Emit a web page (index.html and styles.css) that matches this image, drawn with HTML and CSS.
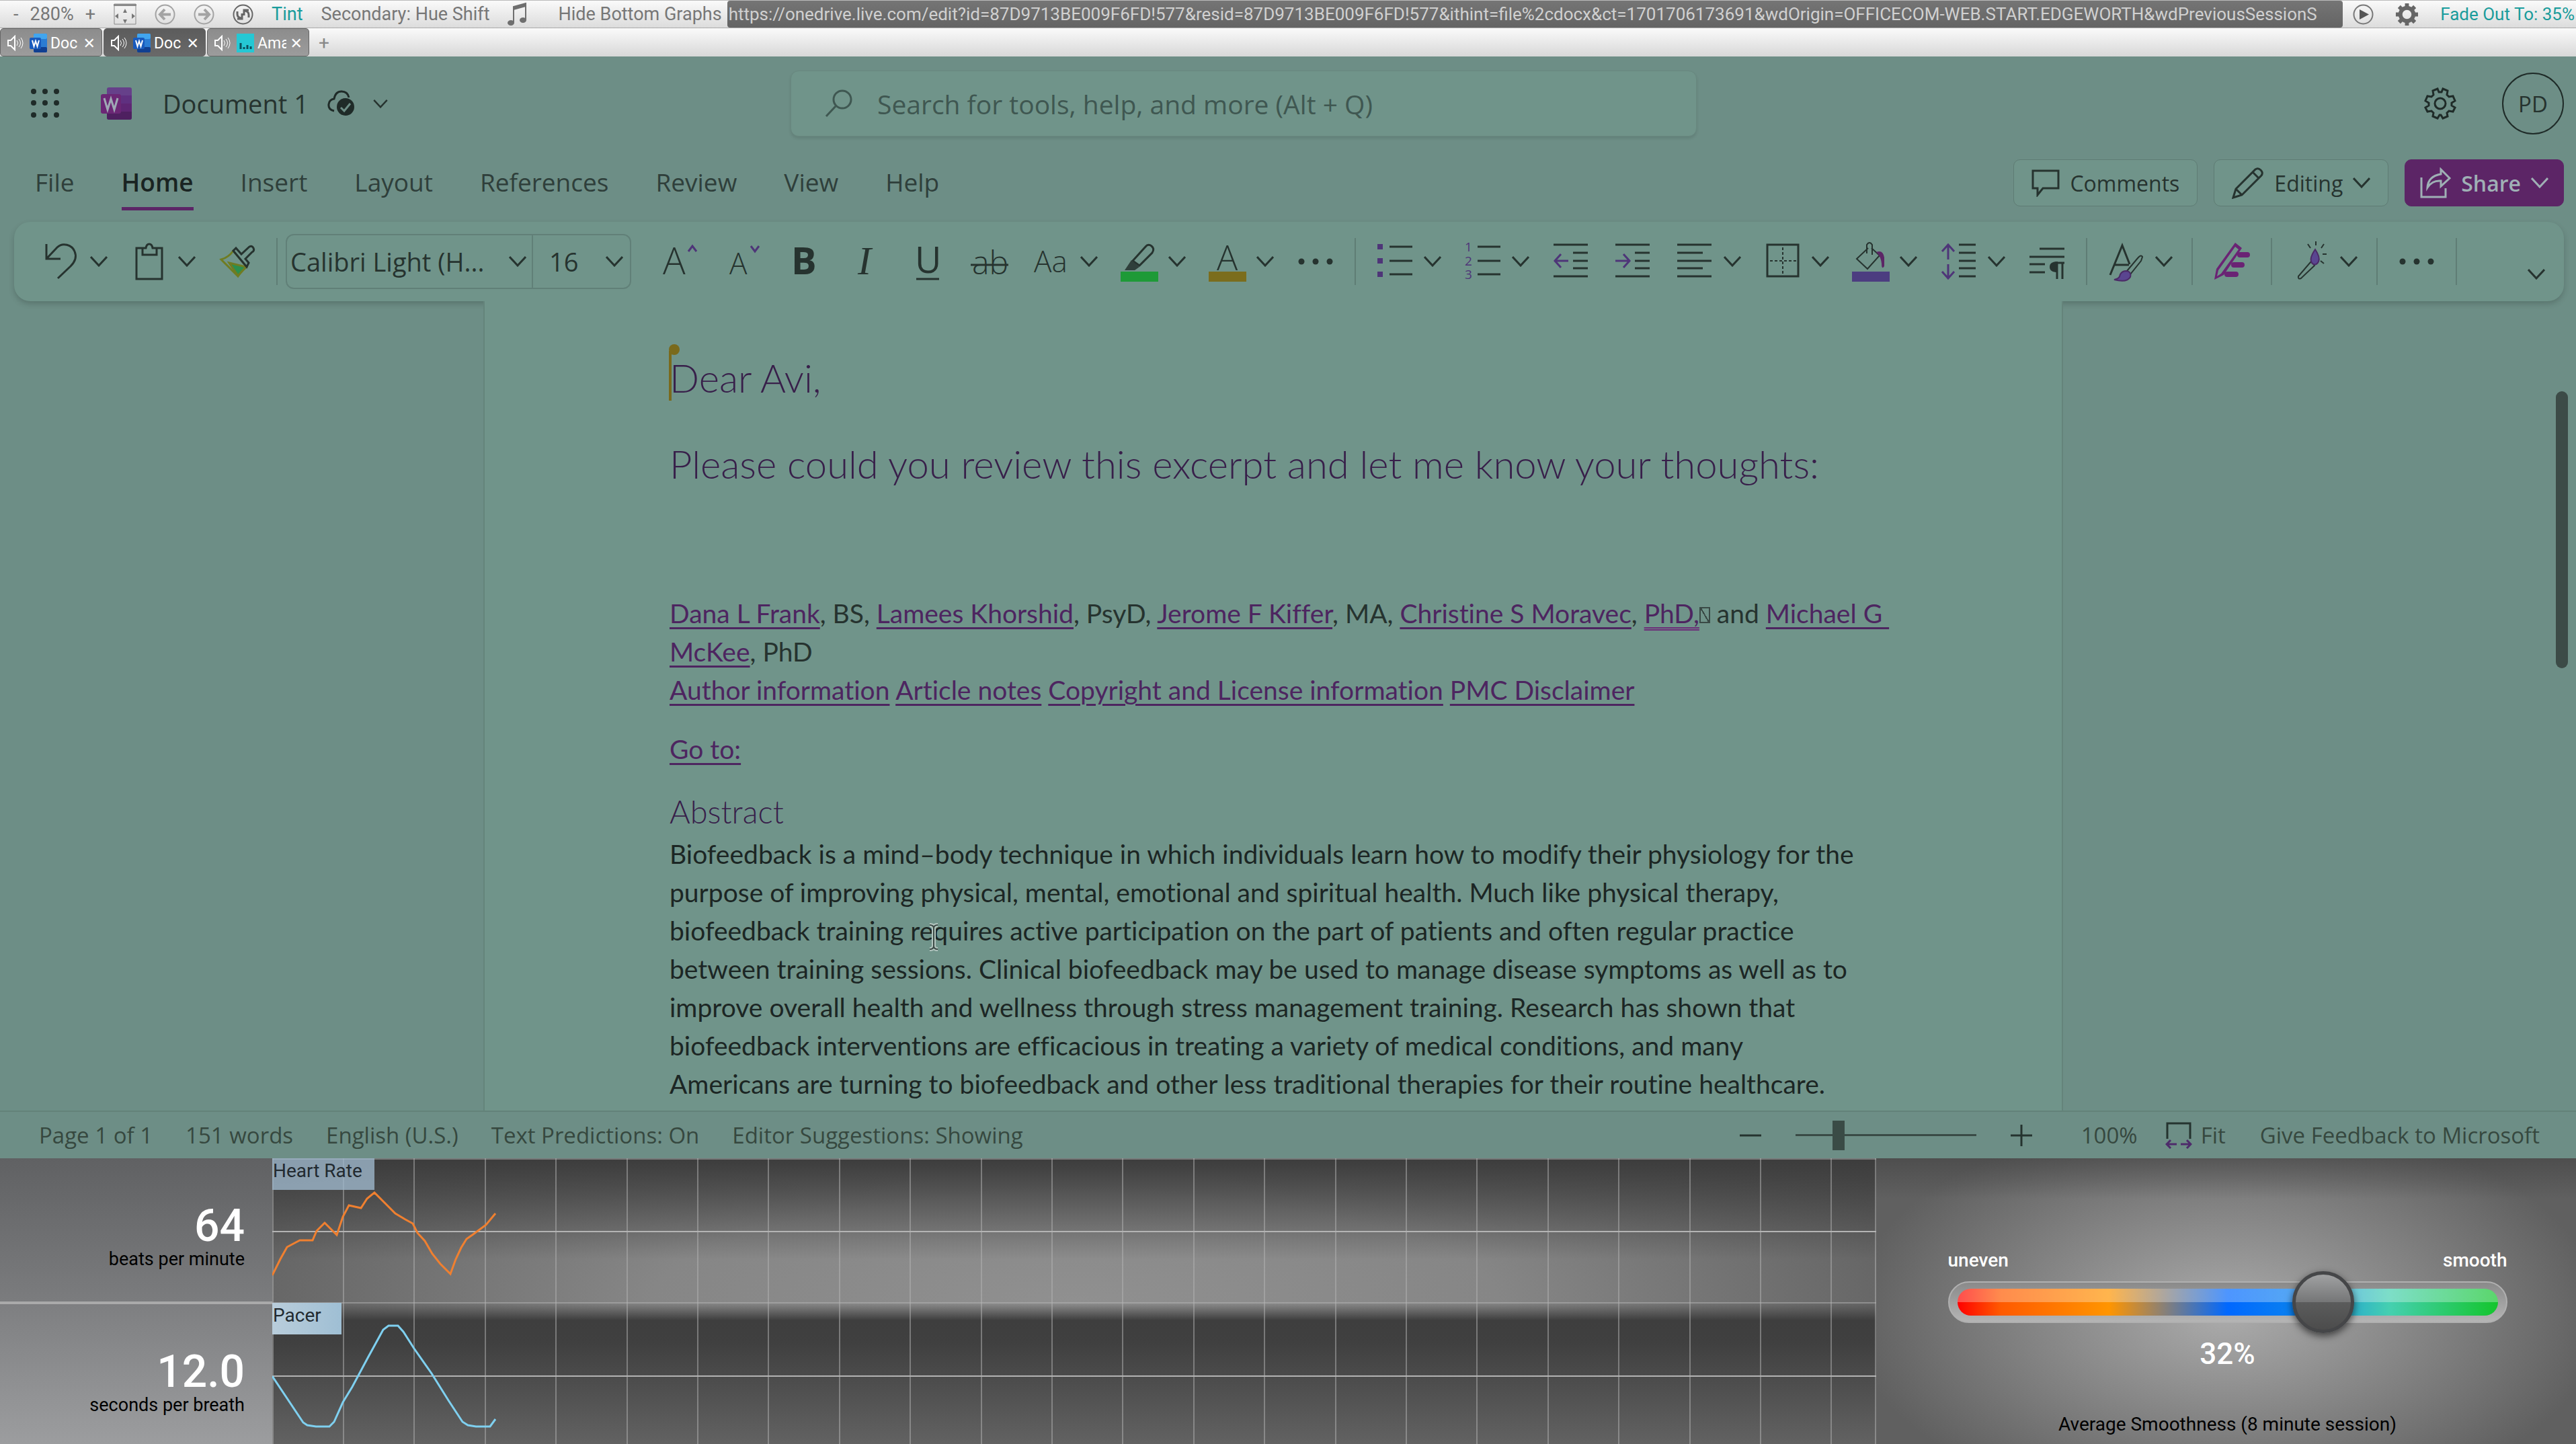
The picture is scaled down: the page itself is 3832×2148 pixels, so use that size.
FILE: index.html
```html
<!DOCTYPE html>
<html lang="en">
<head>
  <meta charset="UTF-8">
  <meta name="viewport" content="width=device-width, initial-scale=1">
  <title>Document 1</title>
  <link rel="stylesheet" href="styles.css">
</head>
<body>
  <svg class="sprites" aria-hidden="true">
    <symbol id="chevron" viewBox="0 0 26 16"><path d="M1 1l12 13L25 1" fill="none" stroke="currentColor" stroke-width="3"/></symbol>
    <symbol id="speaker" viewBox="0 0 24 24">
      <path d="M1 8h4l6-6v20l-6-6H1z" fill="none" stroke="currentColor" stroke-width="2"/>
      <path d="M14 8q3 4 0 8M17 6q5 6 0 12M20 4q6 8 0 16" fill="none" stroke="currentColor" stroke-width="1"/>
    </symbol>
    <symbol id="word" viewBox="0 0 26 28">
      <rect x="6" width="20" height="28" rx="2" fill="#2b7cd3"/>
      <rect x="6" width="20" height="8" rx="2" fill="#41a5ee"/>
      <rect x="6" y="20" width="20" height="8" rx="2" fill="#103f91"/>
      <rect y="6" width="17" height="17" rx="2" fill="#185abd"/>
      <path d="M4 10l2.500 9 2.500-8 2.500 8 2.500-9" fill="none" stroke="#fff" stroke-width="2"/>
    </symbol>
    <symbol id="dots" viewBox="0 0 56 64"><g fill="currentColor" stroke="none"><circle cx="7" cy="32" r="4.500"/><circle cx="28" cy="32" r="4.500"/><circle cx="49" cy="32" r="4.500"/></g></symbol>
  </svg>

  <div class="browser-bar">
    <div class="page-zoom">
      <button>-</button>
      <span>280%</span>
      <button>+</button>
    </div>
    <button aria-label="Full screen">
      <svg width="34" height="34" viewBox="0 0 34 34">
        <path d="M1 2h32v30H1z" fill="none" stroke="#8a8a8a" stroke-width="1"/>
        <path d="M0 2h34v3H0z" fill="#8a8a8a"/>
        <path d="M17 9l3 6h-6zM17 31l3-6h-6zM2 20l5-4v8zM32 20l-5-4v8z" fill="#777"/>
      </svg>
    </button>
    <button aria-label="Back">
      <svg width="31" height="31" viewBox="0 0 31 31" fill="none" stroke="#a3a3a3">
        <circle cx="15.500" cy="15.500" r="14" stroke-width="2"/><path d="M24 15.500H8M15 8l-7 7.500 7 7.500" stroke-width="4"/>
      </svg>
    </button>
    <button aria-label="Forward">
      <svg width="31" height="31" viewBox="0 0 31 31" fill="none" stroke="#a3a3a3">
        <circle cx="15.500" cy="15.500" r="14" stroke-width="2"/><path d="M7 15.500h16M16 8l7 7.500-7 7.500" stroke-width="4"/>
      </svg>
    </button>
    <button aria-label="Refresh">
      <svg width="31" height="31" viewBox="0 0 31 31" fill="none" stroke="#666">
        <circle cx="15.500" cy="15.500" r="14" stroke-width="2"/>
        <path d="M7 11v4q0 5 6 6M24 20v-4q0-5-6-6" stroke-width="3"/><path d="M14 14v8H7M17 17V9h7" stroke-width="3"/>
      </svg>
    </button>
    <button class="teal">Tint</button>
    <button>Secondary: Hue Shift</button>
    <button aria-label="Music">
      <svg width="30" height="36" viewBox="0 0 30 36">
        <path d="M9 31V7l18-5v25" fill="none" stroke="#6f6f6f" stroke-width="2"/><path d="M9 7l18-5v5L9 12z" fill="#6f6f6f"/>
        <ellipse cx="5" cy="31" rx="5" ry="4" fill="#6f6f6f"/><ellipse cx="23" cy="27" rx="5" ry="4" fill="#6f6f6f"/>
      </svg>
    </button>
    <div class="address">
      <button>Hide Bottom Graphs</button>
      <input type="text" aria-label="Address" value="https://onedrive.live.com/edit?id=87D9713BE009F6FD!577&amp;resid=87D9713BE009F6FD!577&amp;ithint=file%2cdocx&amp;ct=1701706173691&amp;wdOrigin=OFFICECOM-WEB.START.EDGEWORTH&amp;wdPreviousSessionS">
    </div>
    <div class="session-tools">
      <button aria-label="Play">
        <svg width="31" height="31" viewBox="0 0 31 31"><circle cx="15.500" cy="15.500" r="14" fill="none" stroke="#777" stroke-width="2"/><path d="M10 8v15l14-7.500z" fill="#555"/></svg>
      </button>
      <button aria-label="Settings">
        <svg width="35" height="35" viewBox="0 0 36 36">
          <circle cx="18" cy="18" r="10" fill="none" stroke="#666" stroke-width="6"/>
          <path d="M18 1v6M18 29v6M1 18h6M29 18h6M6 6l4 4M26 26l4 4M6 30l4-4M26 10l4-4" stroke="#666" stroke-width="6"/>
        </svg>
      </button>
      <button class="teal">Fade Out To: 35%</button>
    </div>
  </div>

  <div class="tab-strip">
    <div class="tab">
      <svg width="24" height="24"><use href="#speaker"/></svg><svg width="26" height="28"><use href="#word"/></svg>
      <span>Doc</span><button aria-label="Close tab">✕</button>
    </div>
    <div class="tab current">
      <svg width="24" height="24"><use href="#speaker"/></svg><svg width="26" height="28"><use href="#word"/></svg>
      <span>Doc</span><button aria-label="Close tab">✕</button>
    </div>
    <div class="tab">
      <svg width="24" height="24"><use href="#speaker"/></svg>
      <svg width="26" height="28" viewBox="0 0 26 28"><rect width="26" height="28" fill="#25c8d4"/><path d="M6 23v-9M11 23v-3M16 23v-6M21 23v-4" stroke="#0b4f5c" stroke-width="3"/></svg>
      <span>Ama</span><button aria-label="Close tab">✕</button>
    </div>
    <button class="new-tab" aria-label="New tab">+</button>
  </div>

  <div class="word-app">
    <header class="title-row">
      <button aria-label="App launcher">
        <svg width="46" height="46" viewBox="0 0 46 46" fill="#1f2b28">
          <circle cx="6" cy="5" r="4"/><circle cx="23" cy="5" r="4"/><circle cx="40" cy="5" r="4"/>
          <circle cx="6" cy="22" r="4"/><circle cx="23" cy="22" r="4"/><circle cx="40" cy="22" r="4"/>
          <circle cx="6" cy="40" r="4"/><circle cx="23" cy="40" r="4"/><circle cx="40" cy="40" r="4"/>
        </svg>
      </button>
      <svg class="word-logo" width="46" height="48" viewBox="0 0 46 48">
        <rect x="9" width="37" height="48" rx="3" fill="#66408a"/>
        <path d="M9 12h37v12H9z" fill="#5f3080"/><path d="M9 24h37v12H9z" fill="#5e2674"/>
        <path d="M9 36h37v9a3 3 0 0 1-3 3H12a3 3 0 0 1-3-3z" fill="#4e2060"/>
        <rect y="10" width="30" height="29" rx="3" fill="#6b2775"/>
        <path d="M5 16l5 17 5-16 5 16 5-17" fill="none" stroke="#9fa9b5" stroke-width="3"/>
      </svg>
      <h1>Document 1</h1>
      <svg width="42" height="40" viewBox="0 0 42 40">
        <path d="M10 31Q1 29 2 21q1-7 8-8Q12 2 21 2q9 0 11 9" fill="none" stroke="#1f2b28" stroke-width="3"/>
        <circle cx="27" cy="25" r="13" fill="#1f2b28"/><path d="M20 26l5 5 9-11" fill="none" stroke="#6d8e86" stroke-width="3"/>
      </svg>
      <svg class="title-arrow" width="22" height="13"><use href="#chevron"/></svg>
      <label class="search">
        <svg width="42" height="42" viewBox="0 0 42 42" fill="none" stroke="#3f5751" stroke-width="3"><circle cx="26" cy="15" r="13"/><path d="M16 25L2 40"/></svg>
        <input type="search" placeholder="Search for tools, help, and more (Alt + Q)">
      </label>
      <button class="settings" aria-label="Settings">
        <svg width="48" height="48" viewBox="0 0 48 48" fill="none" stroke="#1f2b28" stroke-width="3">
          <path d="M20 2l2 5h4l2-5 7 3-1 6 3 3 6-1 3 7-5 3v4l5 3-3 6-6-1-3 3 1 5-7 3-3-5h-2l-3 5-7-3 1-5-3-3-6 1-3-6 5-3v-4l-5-3 3-7 6 1 3-3-1-6z"/>
          <circle cx="24" cy="24" r="8"/>
        </svg>
      </button>
      <button class="avatar">PD</button>
    </header>

    <nav class="menu-row">
      <a href="#">File</a>
      <a href="#" class="active">Home</a>
      <a href="#">Insert</a>
      <a href="#">Layout</a>
      <a href="#">References</a>
      <a href="#">Review</a>
      <a href="#">View</a>
      <a href="#">Help</a>
      <div class="menu-actions">
        <button>
          <svg width="42" height="42" viewBox="0 0 42 42" fill="none" stroke="currentColor" stroke-width="3"><path d="M2 3h38v26H17L9 39V29H2z"/></svg>
          Comments
        </button>
        <button>
          <svg width="48" height="48" viewBox="0 0 48 48" fill="none" stroke="currentColor" stroke-width="3"><path d="M2 46l4-13L35 4q4-3 8 1t1 8L15 42zM6 33l9 9M31 8l9 9"/></svg>
          Editing
          <svg width="26" height="16"><use href="#chevron"/></svg>
        </button>
        <button class="share">
          <svg width="46" height="46" viewBox="0 0 46 46" fill="none" stroke="currentColor" stroke-width="3"><path d="M2 15v29h36V31M31 3l13 13-13 12v-8q-13-1-20 10Q12 13 31 10z"/></svg>
          Share
          <svg width="26" height="16"><use href="#chevron"/></svg>
        </button>
      </div>
    </nav>

    <div class="ribbon">
      <button class="tool split" aria-label="Undo">
        <svg class="icon" viewBox="0 0 56 64"><path d="M6 6v22h21M6 28l16-17c8-8 22-4 26 6 4 9 0 16-6 22L23 57"/></svg>
        <svg class="arrow"><use href="#chevron"/></svg>
      </button>
      <button class="tool split" aria-label="Paste">
        <svg class="icon" viewBox="0 0 56 64"><path d="M17 12H9v46h38V12h-8M18 12h5q1-6 5-6t5 6h6v10H18z"/></svg>
        <svg class="arrow"><use href="#chevron"/></svg>
      </button>
      <button class="tool" aria-label="Format Painter">
        <svg class="icon" viewBox="0 0 56 64">
          <path d="M4 29q11-3 18-13l20 24q-7 5-13 14z" stroke="#6f7c22"/><path d="M16 34l25 6-12 13z" fill="#2b8f4e" stroke="#6f7c22"/>
          <path d="M22 16l4-4 8 9 12-11q4-2 6 2t-2 6L40 28l5 6-3 6z" fill="#70948a"/>
        </svg>
      </button>
      <span class="divider"></span>
      <div class="font-box">
        <select class="font-name" aria-label="Font"><option>Calibri Light (H...</option></select>
        <svg class="arrow"><use href="#chevron"/></svg>
        <select class="font-size" aria-label="Font size"><option>16</option></select>
        <svg class="arrow"><use href="#chevron"/></svg>
      </div>
      <button class="tool" aria-label="Grow Font">
        <svg class="icon" viewBox="0 0 56 64"><text x="2" y="51" font-size="56">A</text><path class="accent" d="M40 17l6-8 6 8"/></svg>
      </button>
      <button class="tool" aria-label="Shrink Font">
        <svg class="icon" viewBox="0 0 56 64"><text x="9" y="51" font-size="44">A</text><path class="accent" d="M41 9l6 8 6-8"/></svg>
      </button>
      <button class="tool" aria-label="Bold">
        <svg class="icon" viewBox="0 0 56 64"><text x="9" y="51" font-size="56" class="bold">B</text></svg>
      </button>
      <button class="tool" aria-label="Italic">
        <svg class="icon" viewBox="0 0 56 64"><text x="16" y="51" font-size="60" class="italic">I</text></svg>
      </button>
      <button class="tool" aria-label="Underline">
        <svg class="icon" viewBox="0 0 56 64"><text x="9" y="49" font-size="54" class="regular">U</text><path d="M11 58h34"/></svg>
      </button>
      <button class="tool" aria-label="Strikethrough">
        <svg class="icon" viewBox="0 0 56 64"><text x="2" y="51" font-size="48">ab</text><path d="M0 37h56"/></svg>
      </button>
      <button class="tool split" aria-label="Change Case">
        <svg class="icon" viewBox="0 0 56 64"><text x="2" y="48" font-size="44">Aa</text></svg>
        <svg class="arrow"><use href="#chevron"/></svg>
      </button>
      <button class="tool split" aria-label="Highlight">
        <svg class="icon" viewBox="0 0 56 64">
          <path d="M18 31L37 10q4-5 9-1t1 10L28 38z"/><path d="M16 30l12 10-7 5H6z" fill="#2f3f3b" stroke="none"/>
          <path d="M0 47h56v15H0z" fill="#1e9a37" stroke="none"/>
        </svg>
        <svg class="arrow"><use href="#chevron"/></svg>
      </button>
      <button class="tool split" aria-label="Font Color">
        <svg class="icon" viewBox="0 0 56 64"><text x="12" y="45" font-size="52">A</text><path d="M0 47h56v15H0z" fill="#7b6d1d" stroke="none"/></svg>
        <svg class="arrow"><use href="#chevron"/></svg>
      </button>
      <button class="tool" aria-label="More Font Options"><svg class="icon"><use href="#dots"/></svg></button>
      <span class="divider"></span>
      <button class="tool split" aria-label="Bullets">
        <svg class="icon" viewBox="0 0 56 64"><path d="M20 10h34M20 31h34M20 51h34"/><path class="accent" stroke-width="8" d="M2 10h8M2 31h8M2 51h8"/></svg>
        <svg class="arrow"><use href="#chevron"/></svg>
      </button>
      <button class="tool split" aria-label="Numbering">
        <svg class="icon" viewBox="0 0 56 64">
          <path d="M20 10h34M20 31h34M20 51h34"/>
          <g class="numbers"><text x="1" y="17">1</text><text x="1" y="38">2</text><text x="1" y="58">3</text></g>
        </svg>
        <svg class="arrow"><use href="#chevron"/></svg>
      </button>
      <button class="tool" aria-label="Decrease Indent">
        <svg class="icon" viewBox="0 0 56 64"><path d="M2 7h51M31 19h22M31 31h22M31 42h22M2 54h51"/><path class="accent" d="M24 31H4M13 21L4 31l9 10"/></svg>
      </button>
      <button class="tool" aria-label="Increase Indent">
        <svg class="icon" viewBox="0 0 56 64"><path d="M2 7h51M31 19h22M31 31h22M31 42h22M2 54h51"/><path class="accent" d="M2 31h20M14 21l9 10-9 10"/></svg>
      </button>
      <button class="tool split" aria-label="Align">
        <svg class="icon" viewBox="0 0 56 64"><path d="M2 7h51M2 19h38M2 31h51M2 42h38M2 54h51"/></svg>
        <svg class="arrow"><use href="#chevron"/></svg>
      </button>
      <button class="tool split" aria-label="Borders">
        <svg class="icon" viewBox="0 0 56 64"><path d="M5 7h46v47H5z"/><path d="M28 11v42M9 31h40" stroke-width="2" stroke-dasharray="4 3"/></svg>
        <svg class="arrow"><use href="#chevron"/></svg>
      </button>
      <button class="tool split" aria-label="Shading">
        <svg class="icon" viewBox="0 0 56 64">
          <path d="M24 12L7 28l16 15 18-20-12-11M22 20V7q4-6 8 0v15" stroke-width="2"/><path d="M36 18q10-4 12 8v13q-4 6-4-4-1-11-8-17z" fill="#5c2566" stroke="none"/>
          <path d="M0 47h56v15H0z" fill="#4c3d80" stroke="none"/>
        </svg>
        <svg class="arrow"><use href="#chevron"/></svg>
      </button>
      <button class="tool split" aria-label="Line Spacing">
        <svg class="icon" viewBox="0 0 56 64"><path d="M28 7h25M28 19h25M28 31h25M28 42h25M28 54h25"/><path class="accent" d="M12 29V8M3 17l9-10 9 10M12 36v20M3 47l9 10 9-10"/></svg>
        <svg class="arrow"><use href="#chevron"/></svg>
      </button>
      <button class="tool" aria-label="Paragraph">
        <svg class="icon" viewBox="0 0 56 64"><path d="M17 13h37M2 25h52M2 36h23M2 48h23M43 58V34M51 58V34M40 34h14"/><path d="M44 32q-12 0-12 8t12 8z" fill="#26332f" stroke="none"/></svg>
      </button>
      <span class="divider"></span>
      <button class="tool split" aria-label="Styles">
        <svg class="icon" viewBox="0 0 56 64">
          <path d="M4 52L22 8l11 28M10 37h22"/><path d="M52 25q-2-4-7 2L29 46l5 5 16-20z" stroke-width="2"/>
          <path d="M28 46q8 1 6 9-5 9-24 4 8-1 9-8 3-5 9-5z" fill="#5a4590" stroke="#4b2a66" stroke-width="2"/>
        </svg>
        <svg class="arrow"><use href="#chevron"/></svg>
      </button>
      <span class="divider"></span>
      <button class="tool" aria-label="Editor">
        <svg class="icon" viewBox="0 0 56 64"><path d="M33 4l10 8L16 52 2 59l3-16z" fill="#6a2374" stroke="none"/><path d="M33 10l5 4-26 36-6 4 2-9z" fill="#70948a" stroke="none"/><path d="M40 22h11M31 37h12M21 51h13" stroke="#6a2374" stroke-width="8" stroke-linecap="round"/></svg>
      </button>
      <span class="divider"></span>
      <button class="tool split" aria-label="Designer">
        <svg class="icon" viewBox="0 0 56 64">
          <path d="M27 33q4 0 6 5L13 57q-5 2-4-3z" stroke-width="2"/><path d="M34 14q8 12 5 18t-8 4q-8-6 3-22z" fill="#5a4590" stroke="#4b2a66" stroke-width="2"/>
          <path d="M35 2v6M23 6l4 6M47 6l-4 6M45 21h6M42 31l5 4" stroke-width="2"/>
        </svg>
        <svg class="arrow"><use href="#chevron"/></svg>
      </button>
      <span class="divider"></span>
      <button class="tool" aria-label="More Options"><svg class="icon"><use href="#dots"/></svg></button>
      <span class="divider"></span>
      <button class="collapse" aria-label="Ribbon Display Options"><svg class="arrow"><use href="#chevron"/></svg></button>
    </div>

    <main class="canvas">
      <article class="page">
        <h2 class="greeting">Dear Avi,</h2>
        <h2>Please could you review this excerpt and let me know your thoughts:</h2>
        <p class="authors">
          <a href="#">Dana L Frank</a>, BS, <a href="#">Lamees Khorshid</a>, PsyD, <a href="#">Jerome F Kiffer</a>, MA, <a href="#">Christine S Moravec</a>, <span class="grammar">PhD,</span><span class="tofu"></span> and <a href="#">Michael G&nbsp;<br>McKee</a>, PhD<br>
          <a href="#">Author information</a> <a href="#">Article notes</a> <a href="#">Copyright and License information</a> <a href="#">PMC Disclaimer</a>
        </p>
        <p class="goto"><a href="#">Go to:</a></p>
        <h3>Abstract</h3>
        <p class="abstract">
          Biofeedback is a mind–body technique in which individuals learn how to modify their physiology for the<br>
          purpose of improving physical, mental, emotional and spiritual health. Much like physical therapy,<br>
          biofeedback training re<span class="pointer"><svg width="18" height="42" viewBox="0 0 18 42" fill="none"><path d="M3 3q6 0 6 5v26q0 5-6 5M15 3q-6 0-6 5v26q0 5 6 5" stroke="#b4c6c0" stroke-width="6"/><path d="M3 3q6 0 6 5v26q0 5-6 5M15 3q-6 0-6 5v26q0 5 6 5" stroke="#3c4a46" stroke-width="2"/></svg></span>quires active participation on the part of patients and often regular practice<br>
          between training sessions. Clinical biofeedback may be used to manage disease symptoms as well as to<br>
          improve overall health and wellness through stress management training. Research has shown that<br>
          biofeedback interventions are efficacious in treating a variety of medical conditions, and many<br>
          Americans are turning to biofeedback and other less traditional therapies for their routine healthcare.
        </p>
      </article>
      <div class="scrollbar"></div>
    </main>

    <footer class="status-row">
      <span>Page 1 of 1</span>
      <span>151 words</span>
      <span>English (U.S.)</span>
      <span>Text Predictions: On</span>
      <span>Editor Suggestions: Showing</span>
      <div class="status-right">
        <button class="zoom-step" aria-label="Zoom out"><svg width="32" height="32" viewBox="0 0 32 32"><path d="M0 16h32" stroke="#25332f" stroke-width="3"/></svg></button>
        <input type="range" class="zoom-slider" min="0" max="100" value="22" aria-label="Zoom">
        <button class="zoom-step" aria-label="Zoom in"><svg width="32" height="32" viewBox="0 0 32 32"><path d="M0 16h32M16 0v32" stroke="#25332f" stroke-width="3"/></svg></button>
        <span class="zoom-value">100%</span>
        <button class="fit">
          <svg width="40" height="40" viewBox="0 0 40 40" fill="none" stroke-width="3"><path d="M3 25V2h34v23" stroke="#25332f"/><path d="M17 33H2M8 27l-6 6 6 6M23 33h15M32 27l6 6-6 6" stroke="#4e2b6b"/></svg>
          Fit
        </button>
        <a href="#">Give Feedback to Microsoft</a>
      </div>
    </footer>
  </div>

  <section class="bio">
    <div class="readings">
      <div class="reading">
        <strong>64</strong>
        <span>beats per minute</span>
      </div>
      <div class="reading pace">
        <strong>12.0</strong>
        <span>seconds per breath</span>
      </div>
    </div>

    <div class="graphs">
      <svg viewBox="0 0 2386 425" preserveAspectRatio="none" fill="none">
        <path class="grid" d="M1 0v425M106 0v425M211 0v425M317 0v425M422 0v425M528 0v425M633 0v425M738 0v425M844 0v425M949 0v425M1055 0v425M1160 0v425M1265 0v425M1371 0v425M1476 0v425M1582 0v425M1687 0v425M1792 0v425M1898 0v425M2003 0v425M2109 0v425M2214 0v425M2319 0v425M2385 0v425M0 1h2386M0 215h2386"/>
        <path class="grid wide" d="M0 109h2386M0 324h2386"/>
        <path class="heart" d="M0 174l12-24 10-18 19-10h19l6-14 12-12 18 18 9-27 9-17 18 4 9-14 11-9 16 16 15 15 15 9 11 6 7 14 11 12 11 19 12 15 15 15 8-22 8-17 8-13 10-7 19-14 14-17"/>
        <path class="pacer" d="M0 324l46 69 6 4 13 2h20l7-7 13-29 14-23 23-43 23-42 8-6h14l8 9 16 25 26 37 25 40 21 32 8 5 12 2h21l8-11"/>
      </svg>
      <span class="tag">Heart Rate</span>
      <span class="tag tag-pacer">Pacer</span>
    </div>

    <div class="smoothness">
      <div class="ends"><span>uneven</span><span>smooth</span></div>
      <input type="range" min="0" max="100" value="70" aria-label="Smoothness">
      <output>32%</output>
      <p>Average Smoothness (8 minute session)</p>
    </div>
  </section>
</body>
</html>
```
FILE: styles.css
```css
* {
  box-sizing: border-box;
}
body {
  margin: 0;
  height: 100vh;
  display: flex;
  flex-direction: column;
  overflow: hidden;
  font-family: 'Open Sans', 'Noto Sans', sans-serif;
  color: #26332f;
  background: #6d8e86;
}
button, input, select {
  font: inherit;
  color: inherit;
  background: none;
  border: none;
  margin: 0;
  padding: 0;
}
button {
  display: inline-flex;
  align-items: center;
  white-space: nowrap;
}
svg {
  display: block;
  flex: none;
}
.sprites {
  position: absolute;
  width: 0;
  height: 0;
}

/* browser chrome */
.browser-bar {
  display: flex;
  align-items: center;
  gap: 27px;
  height: 42px;
  padding: 0 2px 0 20px;
  font-family: Roboto, sans-serif;
  font-size: 27px;
  color: #777;
  background: linear-gradient(#fafafa, #dcdcdc);
  border-top: 1px solid #bbb;
  border-bottom: 1px solid #aaa;
}
.page-zoom {
  display: flex;
  gap: 17px;
}
.teal {
  color: #1a9c9c;
}
.address {
  display: flex;
  flex: 1;
  gap: 8px;
  height: 40px;
  margin-left: 18px;
}
.address input {
  flex: 1;
  min-width: 0;
  padding: 0 2px;
  border-radius: 4px;
  font-size: 26px;
  color: #d0d0d0;
  background: linear-gradient(#757575, #646464);
}
.session-tools {
  display: flex;
  align-items: center;
  gap: 32px;
  margin-left: -12px;
  font-size: 26px;
}
.tab-strip {
  display: flex;
  gap: 2px;
  height: 42px;
  font-family: Roboto, sans-serif;
  background: linear-gradient(#fafafa, #d8d8d8);
}
.tab {
  display: flex;
  align-items: center;
  width: 152px;
  padding: 2px 9px 0 10px;
  color: #fff;
  font-size: 23px;
  background: linear-gradient(#8c8c8c, #9c9c9c);
  border: 1px solid #666;
  border-radius: 5px;
}
.tab.current {
  background: linear-gradient(#5c5c5c, #696969);
}
.tab svg + svg {
  margin: 0 5px 0 9px;
}
.tab span {
  flex: 1;
  overflow: hidden;
}
.tab button {
  margin-left: 6px;
  font-family: 'DejaVu Sans', sans-serif;
  font-size: 22px;
  font-weight: bold;
}
.new-tab {
  margin-left: 12px;
  font-size: 28px;
  color: #888;
}

/* word */
.word-app {
  flex: 1;
  min-height: 0;
  display: flex;
  flex-direction: column;
  background: #6d8e86;
}
.title-row {
  position: relative;
  display: flex;
  align-items: center;
  height: 140px;
  flex: none;
  padding: 0 18px 0 44px;
}
.word-logo {
  margin: 0 46px 0 60px;
}
.title-row h1 {
  margin: 0 28px 0 0;
  font-size: 38px;
  font-weight: 400;
}
.title-arrow {
  margin-left: 26px;
}
.search {
  position: absolute;
  left: 50%;
  transform: translateX(-50%);
  margin-left: -66px;
  display: flex;
  align-items: center;
  gap: 36px;
  width: 1348px;
  height: 98px;
  padding-left: 50px;
  font-size: 39px;
  background: #70948a;
  border: 1px solid #68887f;
  border-radius: 12px;
  box-shadow: 0 3px 4px rgba(0,0,0,0.1);
}
.search input {
  flex: 1;
}
.search input::placeholder {
  color: #3f5751;
}
.settings {
  margin-left: auto;
}
.avatar {
  justify-content: center;
  width: 92px;
  height: 92px;
  margin-left: 68px;
  font-size: 33px;
  border: 2px solid #1f2b28;
  border-radius: 50%;
}
.menu-row {
  display: flex;
  align-items: flex-end;
  gap: 70px;
  height: 89px;
  flex: none;
  padding: 0 18px 0 52px;
  font-size: 37px;
}
.menu-row a {
  color: #2f3f3b;
  line-height: 50px;
  padding-bottom: 12px;
  border-bottom: 5px solid transparent;
  text-decoration: none;
}
.menu-row .active {
  font-weight: 600;
  color: #1a2422;
  border-color: #5c2566;
}
.menu-actions {
  display: flex;
  gap: 24px;
  margin-left: auto;
  font-size: 32px;
}
.menu-actions button {
  gap: 15px;
  height: 70px;
  margin-bottom: 6px;
  padding: 0 26px;
  background: #70948a;
  border: 1px solid #5e7c74;
  border-radius: 10px;
}
.menu-actions .share {
  padding: 0 22px;
  color: #9fb0b5;
  font-weight: 600;
  background: #5c2566;
  border-color: #5c2566;
}

/* ribbon */
.ribbon {
  position: relative;
  display: flex;
  align-items: center;
  height: 118px;
  flex: none;
  margin: 17px 18px 0 21px;
  padding-left: 24px;
  background: #70948a;
  border-radius: 24px;
  box-shadow: 0 4px 8px rgba(0,0,0,0.18);
}
.tool {
  width: 92px;
  height: 92px;
  flex: none;
  padding-left: 18px;
}
.tool.split {
  width: 131px;
  gap: 15px;
}
.icon {
  width: 56px;
  height: 64px;
  overflow: visible;
  fill: none;
  stroke: #26332f;
  stroke-width: 3;
}
.icon text {
  fill: #26332f;
  stroke: none;
  font-weight: 300;
}
.icon .regular {
  font-weight: 400;
}
.icon .bold {
  font-weight: 700;
}
.icon .italic {
  font-family: 'Liberation Serif', serif;
  font-style: italic;
}
.icon .numbers text {
  fill: #4e3578;
  font-size: 19px;
  font-weight: 400;
}
.icon .accent {
  stroke: #4e3578;
}
.arrow {
  width: 26px;
  height: 16px;
}
.divider {
  width: 2px;
  height: 70px;
  margin: 0 12px;
  background: #5f7d75;
}
.font-box {
  display: flex;
  align-items: center;
  width: 514px;
  height: 82px;
  flex: none;
  margin-right: 27px;
  padding-right: 10px;
  font-size: 38px;
  border: 2px solid #618078;
  border-radius: 12px;
}
.font-box select {
  appearance: none;
  height: 100%;
}
.font-name {
  width: 330px;
  padding-left: 5px;
}
.font-size {
  flex: 1;
  margin-left: 8px;
  padding-left: 24px;
  border-left: 2px solid #618078;
}
.collapse {
  align-self: flex-end;
  margin: 0 28px 32px auto;
}

/* document */
.canvas {
  position: relative;
  flex: 1;
  min-height: 0;
  overflow: hidden;
}
.page {
  width: 2350px;
  height: 100%;
  margin: 0 auto;
  transform: translateX(-22px);
  padding: 82px 0 0 275px;
  font-family: Lato, sans-serif;
  font-size: 39px;
  line-height: 57px;
  font-variant-ligatures: none;
  white-space: nowrap;
  background: #70948a;
  border: solid #64847b;
  border-width: 0 2px;
}
.page h2, .page h3, .page p {
  margin: 0;
}
.page h2 {
  font-size: 58px;
  font-weight: 300;
  line-height: 64px;
  color: #381f4a;
}
.greeting {
  position: relative;
}
.page .greeting {
  margin-bottom: 64px;
}
/* collaborator caret */
.greeting::before, .greeting::after {
  content: '';
  position: absolute;
  background: #7a6a1c;
}
.greeting::before {
  left: -1px;
  top: -8px;
  width: 4px;
  height: 74px;
}
.greeting::after {
  left: -1px;
  top: -18px;
  width: 16px;
  height: 16px;
  border-radius: 50%;
}
.page .authors {
  margin-top: 162px;
}
.page a {
  color: #4d2560;
  text-decoration-thickness: 3px;
  text-underline-offset: 6px;
}
.grammar {
  color: #4d2560;
  text-decoration: underline double #6b2c78 2px;
  text-underline-offset: 6px;
}
.tofu {
  display: inline-block;
  width: 16px;
  height: 24px;
  border: 2px solid #3a4a46;
  background: linear-gradient(60deg, transparent 45%, #3a4a46 45%, #3a4a46 55%, transparent 55%);
}
.page .goto {
  margin-top: 31px;
}
.page h3 {
  margin-top: 36px;
  font-size: 47px;
  font-weight: 300;
  color: #381f4a;
}
.page .abstract {
  margin-top: 6px;
  color: #1c2624;
}
.pointer {
  position: relative;
}
.pointer svg {
  position: absolute;
  left: -8px;
  top: 12px;
}
.scrollbar {
  position: absolute;
  right: 12px;
  top: 134px;
  width: 18px;
  height: 412px;
  border-radius: 9px;
  background: #3c4b47;
}

/* status */
.status-row {
  display: flex;
  align-items: center;
  gap: 49px;
  height: 71px;
  flex: none;
  padding: 0 54px 0 58px;
  font-size: 33px;
  color: #36483f;
  border-top: 2px solid #638279;
  white-space: nowrap;
}
.status-row a {
  color: inherit;
  text-decoration: none;
}
.status-right {
  display: flex;
  align-items: center;
  gap: 51px;
  margin-left: auto;
}
.zoom-slider {
  appearance: none;
  width: 269px;
  height: 44px;
}
.zoom-slider::-webkit-slider-runnable-track {
  height: 3px;
  background: #3a4b46;
}
.zoom-slider::-webkit-slider-thumb {
  appearance: none;
  width: 18px;
  height: 44px;
  margin-top: -20px;
  background: #3a4b46;
}
.zoom-value {
  margin: 0 -10px 0 22px;
}
.fit {
  gap: 13px;
}

/* biofeedback panel */
.bio {
  display: grid;
  grid-template-columns: 405px 1fr 1041px;
  height: 425px;
  flex: none;
  font-family: Roboto, sans-serif;
  font-size: 28px;
}
.readings {
  display: grid;
  grid-template-rows: 1fr 1fr;
}
.reading {
  display: flex;
  flex-direction: column;
  align-items: flex-end;
  padding: 68px 41px 0 0;
  font-size: 27px;
  color: #000;
  background: linear-gradient(#606163, #7b7c7e);
}
.reading.pace {
  border-top: 4px solid #aaa;
  background: linear-gradient(#7e7f81, #9c9d9f);
}
.reading strong {
  font-size: 66px;
  font-weight: 500;
  line-height: 66px;
  color: #fff;
}
.reading span {
  line-height: 32px;
}
.graphs {
  position: relative;
  background:
    linear-gradient(#3c3c3c, rgba(60,60,60,0)) 0 0 / 100% 150px no-repeat,
    linear-gradient(rgba(62,62,62,0), #3e3e3e 26px, #404040 60px, #626262) 0 215px / 100% 210px no-repeat,
    radial-gradient(1400px 360px at 50% 215px, #909090, #868686 45%, #5c5c5c);
}
.graphs svg {
  width: 100%;
  height: 100%;
}
.grid {
  stroke: #b4b4b4;
  stroke-width: 1;
}
.wide {
  stroke-width: 2;
}
.heart {
  stroke: #f08030;
  stroke-width: 3;
}
.pacer {
  stroke: #7fd0f0;
  stroke-width: 3;
}
.tag {
  position: absolute;
  left: 0;
  top: 0;
  height: 47px;
  padding: 0 18px 0 1px;
  line-height: 38px;
  color: #222a30;
  background: rgba(158,182,202,0.8);
}
.tag-pacer {
  top: 215px;
  padding-right: 30px;
  background: linear-gradient(90deg, #b9cddb, #9fbfd4);
}
.smoothness {
  display: flex;
  flex-direction: column;
  align-items: center;
  padding-left: 4px;
  color: #fff;
  background:
    linear-gradient(rgba(60,60,60,0.5), rgba(60,60,60,0)) 0 0 / 100% 60px no-repeat,
    radial-gradient(560px 300px at 50% 55%, #ababab, #606060);
}
.ends {
  display: flex;
  justify-content: space-between;
  width: 832px;
  margin-top: 136px;
  line-height: 32px;
  font-weight: 500;
}
.smoothness input {
  appearance: none;
  width: 832px;
  height: 62px;
  margin-top: 15px;
  padding: 10px 12px;
  border-radius: 31px;
  background: linear-gradient(#8a8a8a, #b5b5b5);
  border: 2px solid #b0b0b0;
}
.smoothness input::-webkit-slider-runnable-track {
  height: 40px;
  border-radius: 20px;
  background:
    linear-gradient(rgba(255,255,255,0.3) 50%, transparent 50%),
    linear-gradient(90deg, #f00, #ff5a00 8%, #ff9500 28%, #0068ff 50%, #0a80f0 62%, #45d0b0 80%, #14c52c);
}
.smoothness input::-webkit-slider-thumb {
  appearance: none;
  width: 92px;
  height: 92px;
  margin-top: -26px;
  border: 5px solid #454648;
  border-radius: 50%;
  background: linear-gradient(#a0a1a2, #757677 50%, #5b5c5c 50%, #4c4c4c);
  box-shadow: 0 4px 12px rgba(0,0,0,0.6);
}
.smoothness output {
  margin-top: 15px;
  font-size: 44px;
  font-weight: 500;
  line-height: 62px;
}
.smoothness p {
  margin: 58px 0 0;
  line-height: 32px;
  color: #000;
}
```
